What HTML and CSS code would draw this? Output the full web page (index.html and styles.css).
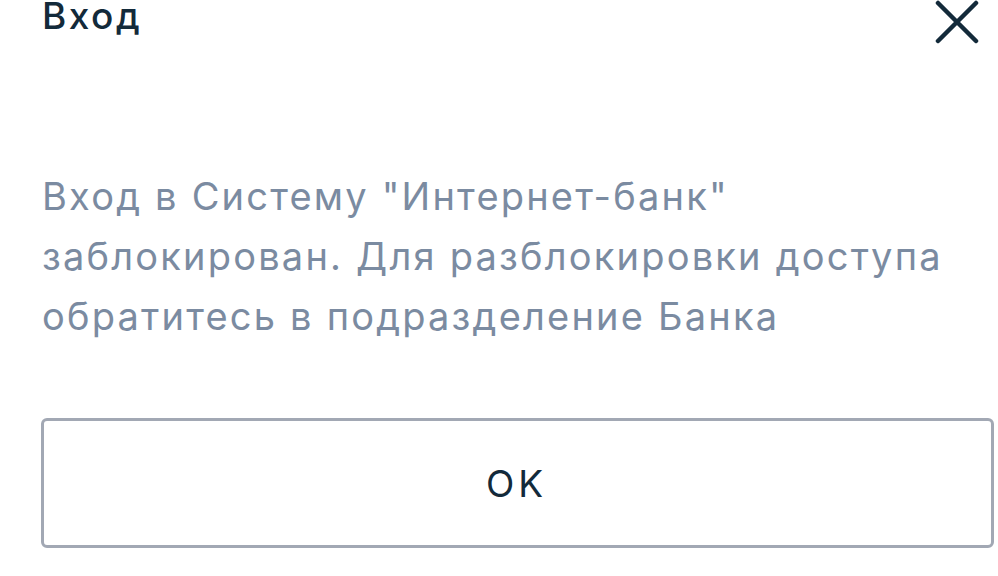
FILE: index.html
```html
<!DOCTYPE html>
<html lang="ru">
<head>
<meta charset="utf-8">
<link rel="stylesheet" href="styles.css">
</head>
<body>
<div class="dialog">
  <header class="head">
    <h1 class="title">Вход</h1>
    <button class="close" aria-label="Закрыть">
      <svg width="44" height="44" viewBox="0 0 44 44"><path d="M3 3 L41 41 M41 3 L3 41" stroke="#132a3a" stroke-width="4.5" stroke-linecap="round" fill="none"/></svg>
    </button>
  </header>
  <p class="message">Вход в Систему "Интернет-банк" заблокирован. Для разблокировки доступа обратитесь в подразделение Банка</p>
  <button class="ok">OK</button>
</div>
</body>
</html>
```
FILE: styles.css
```css
html, body {
  margin: 0;
  padding: 0;
  background: #ffffff;
}
body {
  font-family: Inter, "Noto Sans", sans-serif;
}
.dialog {
  width: 998px;
  height: 576px;
  box-sizing: border-box;
  padding: 0 5px 0 41px;
  display: flex;
  flex-direction: column;
}
.head {
  display: flex;
  justify-content: space-between;
  align-items: flex-start;
  margin-top: -6px;
  height: 51px;
}
.title {
  margin: 0;
  font-size: 37px;
  font-weight: 500;
  line-height: 44px;
  letter-spacing: 2.5px;
  color: #132a3a;
  padding-left: 1px;
}
.close {
  border: 0;
  background: none;
  padding: 0;
  margin: 6px 14px 0 0;
  width: 44px;
  height: 44px;
}
.close svg { display: block; }
.message {
  margin: 121px 0 0 1px;
  font-size: 38px;
  line-height: 60px;
  letter-spacing: 2.2px;
  color: #7b8ba1;
  font-weight: 400;
}
.ok {
  margin-top: 72px;
  height: 130px;
  width: 953px;
  box-sizing: border-box;
  border: 3px solid #a2a8b4;
  border-radius: 6px;
  background: #fff;
  font-family: Inter, "Noto Sans", sans-serif;
  font-size: 37px;
  font-weight: 400;
  letter-spacing: 4px;
  padding-left: 4px;
  color: #132a3a;
}
```
